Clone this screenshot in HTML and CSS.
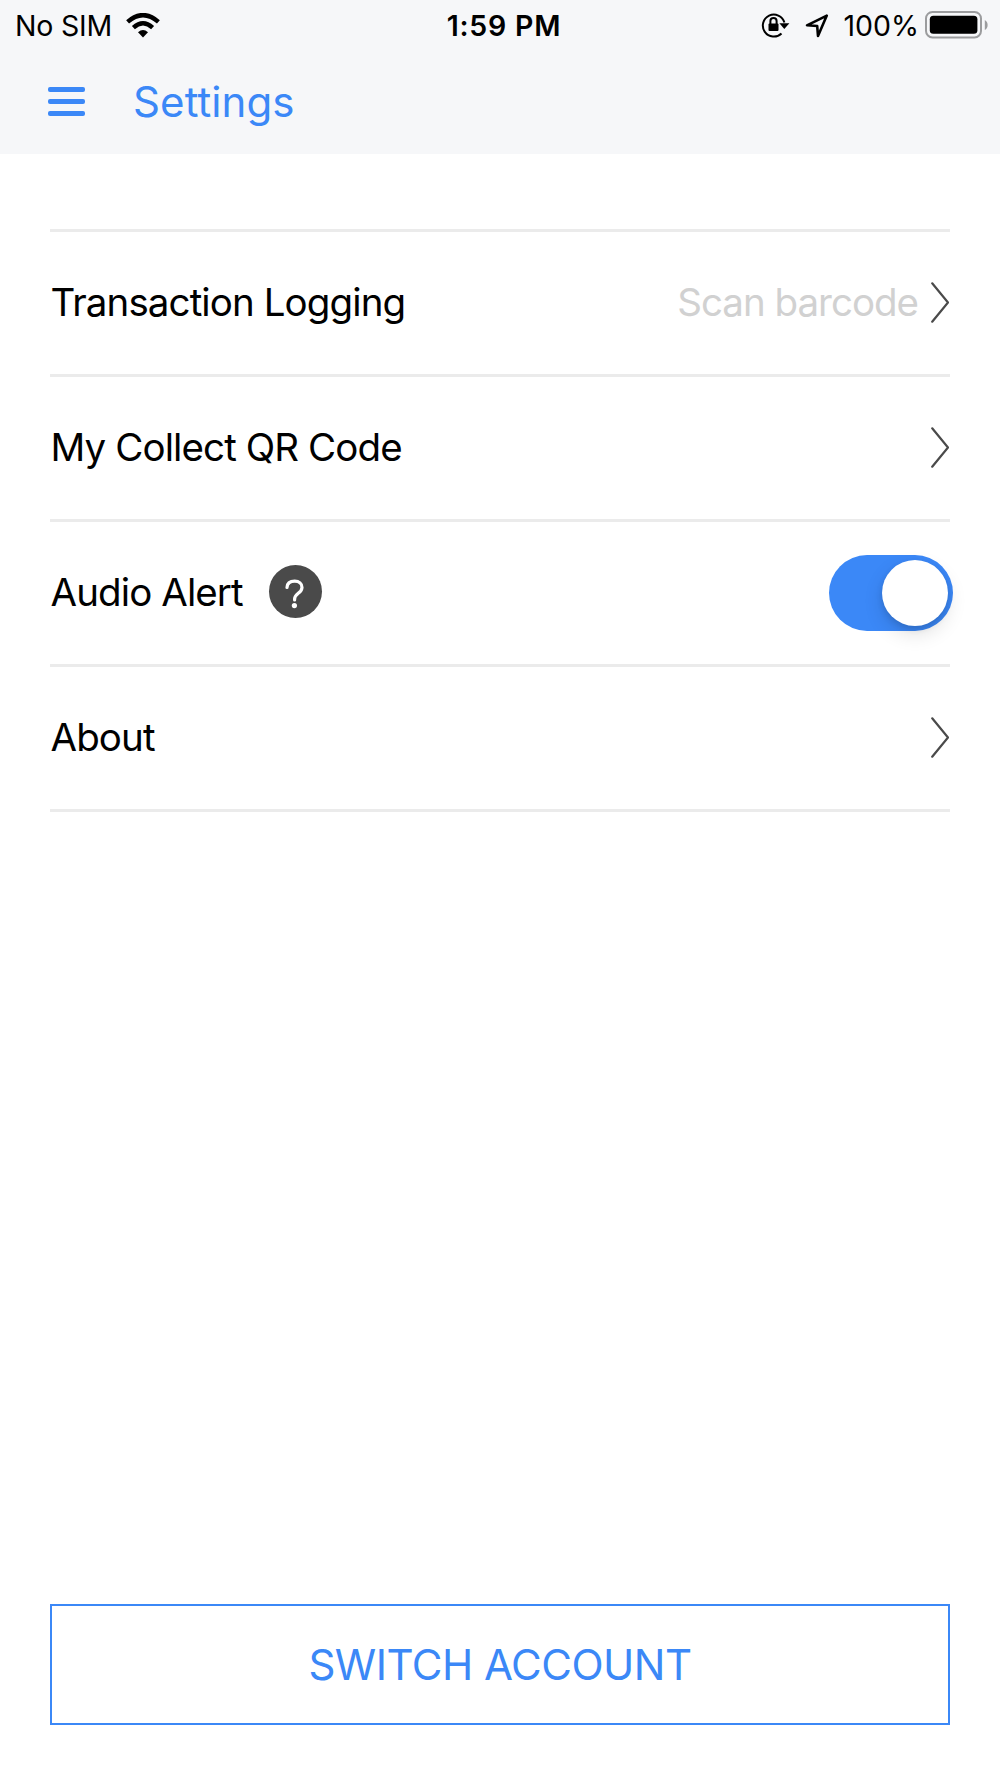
FILE: index.html
```html
<!doctype html>
<html lang="en">
	<head>
		<meta charset="utf-8">
		<title>Settings</title>
		<link rel="stylesheet" href="styles.css">
	</head>
	<body>
		<header class="header">
			<div class="status">
				<div class="status-left">
					<span class="carrier">No SIM</span>
					<svg class="wifi" width="34" height="25" viewBox="0 0 34 25">
						<path d="M17 24.5 L12 19.2 Q17 14.6 22 19.2 Z" />
						<path class="arc" d="M7.4 14.6 Q17 5.8 26.6 14.6" />
						<path class="arc" d="M1.6 8.8 Q17 -4.6 32.4 8.8" />
					</svg>
				</div>
				<span class="time">1:59 PM</span>
				<div class="status-right">
					<svg class="lock" width="29" height="26" viewBox="0 0 29 26">
						<path class="ring" d="M20.5 21.5 A11 11 0 1 1 23.4 10.5" />
						<path d="M18.4 11.2 H28.4 L23.3 17 Z" />
						<rect x="7.5" y="11.5" width="10" height="7.5" rx="1" />
						<path class="shackle" d="M9.4 12 V9 A3.1 3.1 0 0 1 15.6 9 V12" />
					</svg>
					<svg class="location" width="24" height="24" viewBox="0 0 24 24">
						<path d="M21.8 1.6 L2 11.3 L12.2 12 L13 22 Z" />
					</svg>
					<span class="percent">100%</span>
					<svg class="battery" width="63" height="28" viewBox="0 0 63 28">
						<rect class="shell" x="1" y="1" width="55" height="25.4" rx="6.5" />
						<rect x="4.8" y="4.8" width="47.6" height="18" rx="3.5" />
						<path class="cap" d="M59.8 9 Q62.6 10.5 62.6 14 Q62.6 17.5 59.8 19 Z" />
					</svg>
				</div>
			</div>
			<div class="navbar">
				<button class="menu" aria-label="Menu">
					<span></span>
					<span></span>
					<span></span>
				</button>
				<h1 class="title">Settings</h1>
			</div>
		</header>

		<ul class="list">
			<li class="row">
				<span class="label">Transaction Logging</span>
				<span class="hint">Scan barcode</span>
				<svg class="chevron" width="18" height="42" viewBox="0 0 18 42"><path d="M1.2 2.3 L17 21.5 L1.2 40.7" /></svg>
			</li>
			<li class="row">
				<span class="label">My Collect QR Code</span>
				<svg class="chevron" width="18" height="42" viewBox="0 0 18 42"><path d="M1.2 2.3 L17 21.5 L1.2 40.7" /></svg>
			</li>
			<li class="row">
				<span class="label">Audio Alert</span>
				<span class="help">
					<svg width="53" height="53" viewBox="0 0 53 53">
						<path d="M18 22.5 C18.2 18.3 21.3 16.2 25.7 16.2 C30.2 16.2 33 18.7 33 22.4 C33 28.2 25.6 28.4 25.6 34 V35" />
						<circle cx="25.4" cy="40.6" r="2.6" />
					</svg>
				</span>
				<span class="switch"><span class="knob"></span></span>
			</li>
			<li class="row">
				<span class="label">About</span>
				<svg class="chevron" width="18" height="42" viewBox="0 0 18 42"><path d="M1.2 2.3 L17 21.5 L1.2 40.7" /></svg>
			</li>
		</ul>

		<button class="account">SWITCH ACCOUNT</button>
	</body>
</html>
```
FILE: styles.css
```css
* {
	box-sizing: border-box;
}

body {
	margin: 0;
	min-height: 1778px;
	display: flex;
	flex-direction: column;
	background: #fff;
	color: #000;
	font-family: Inter, "Liberation Sans", Arial, sans-serif;
}

button {
	background: none;
	border: 0;
	padding: 0;
	font-family: inherit;
}

.header {
	background: #f6f7f9;
	height: 154px;
}

.status {
	display: grid;
	grid-template-columns: 1fr auto 1fr;
	align-items: center;
	height: 50px;
	padding: 0 12px 0 15px;
	font-size: 28.5px;
	line-height: 50px;
}

.status-left, .status-right {
	display: flex;
	align-items: center;
}

.status-right {
	justify-content: flex-end;
}

.carrier {
	padding-top: 1px;
	letter-spacing: -0.2px;
}

.wifi {
	margin: 0 0 1px 14px;
}

.wifi .arc {
	fill: none;
	stroke: #000;
	stroke-width: 4.4;
}

.time {
	padding: 1px 0 0 5px;
	font-weight: 600;
	letter-spacing: 0.8px;
}

.lock {
	margin-bottom: 2px;
}

.lock .ring, .lock .shackle {
	fill: none;
	stroke: #000;
	stroke-width: 2;
}

.location {
	margin: 0 14px 0 15px;
	fill: none;
	stroke: #000;
	stroke-width: 2.6;
	stroke-linejoin: round;
}

.percent {
	padding-top: 1px;
}

.battery {
	margin: 0 0 1px 6px;
}

.battery .shell {
	fill: none;
	stroke: #9b9c9e;
	stroke-width: 2;
}

.battery .cap {
	fill: #9b9c9e;
}

.navbar {
	display: flex;
	align-items: center;
	height: 102px;
	padding-left: 48px;
}

.menu {
	display: flex;
	flex-direction: column;
	gap: 7px;
	width: 37px;
}

.menu span {
	height: 5px;
	border-radius: 2px;
	background: #3b88f7;
}

.title {
	margin: 0 0 0 48px;
	color: #3b88f7;
	font-size: 42px;
	font-weight: 400;
	letter-spacing: 0.1px;
}

.list {
	list-style: none;
	margin: 75px 50px 0;
	padding: 0;
	border-top: 3px solid #ebebeb;
}

.row {
	display: flex;
	align-items: center;
	height: 145px;
	padding-bottom: 2px;
	border-bottom: 3px solid #ebebeb;
	font-size: 38.5px;
}

.label {
	margin-left: 0.5px;
	letter-spacing: -0.9px;
}

.hint {
	margin-left: auto;
	color: #d1d1d1;
	letter-spacing: -1px;
}

.chevron {
	margin: 0 1px 0 auto;
	fill: none;
	stroke: #4a4a4a;
	stroke-width: 2.2;
	stroke-linecap: round;
}

.hint + .chevron {
	margin-left: 13px;
}

.help {
	width: 53px;
	height: 53px;
	margin: 0 0 1px 26px;
	border-radius: 50%;
	background: #4a4a4a;
}

.help path {
	fill: none;
	stroke: #fff;
	stroke-width: 3.2;
	stroke-linecap: round;
}

.help circle {
	fill: #fff;
}

.switch {
	display: flex;
	justify-content: flex-end;
	align-items: center;
	width: 123.5px;
	height: 75.5px;
	margin: 2px -2.6px 0 auto;
	padding-right: 4.6px;
	border-radius: 38px;
	background: #3b88f7;
}

.knob {
	width: 66px;
	height: 66px;
	border-radius: 50%;
	background: #fff;
	box-shadow: 0 8px 20px rgba(0, 0, 0, 0.12), 0 3px 6px rgba(0, 0, 0, 0.12);
}

.account {
	height: 121px;
	margin: auto 50px 53px;
	border: 2px solid #3b88f7;
	color: #3b88f7;
	font-size: 42px;
	letter-spacing: -0.5px;
}
```
